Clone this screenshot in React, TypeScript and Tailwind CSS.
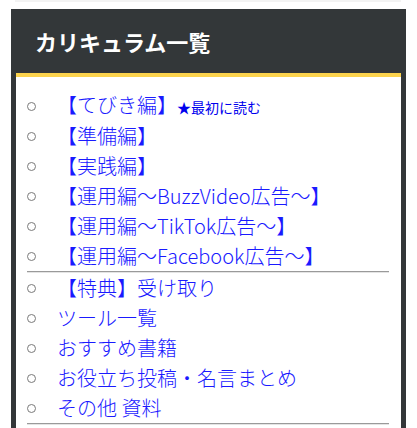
const items1 = [
  { label: '【てびき編】', note: '★最初に読む' },
  { label: '【準備編】' },
  { label: '【実践編】' },
  { label: '【運用編〜BuzzVideo広告〜】' },
  { label: '【運用編〜TikTok広告〜】' },
  { label: '【運用編〜Facebook広告〜】' },
];

const items2 = [
  { label: '【特典】受け取り' },
  { label: 'ツール一覧' },
  { label: 'おすすめ書籍' },
  { label: 'お役立ち投稿・名言まとめ' },
  { label: 'その他 資料' },
];

const Item = ({ label, note }: { label: string; note?: string }) => (
  <li className="flex items-center h-[30px]">
    <span className="w-[30px] mr-[11px] flex justify-center shrink-0">
      <span className="block w-[9px] h-[9px] rounded-full border-[1.5px] border-[#7a7a7a]"></span>
    </span>
    <a href="#" className="text-[20px] leading-[30px] font-light text-[#1a1aff] whitespace-nowrap">
      {label}
      {note && <span className="text-[14px] font-normal text-[#0000ee]">{note}</span>}
    </a>
  </li>
);

const Divider = () => (
  <li className="ml-[11px] mr-[12px] h-[2px] border-t border-[#9a9a9a] border-b border-b-[#e4e4e4]"></li>
);

export default function App() {
  return (
    <div
      className="w-[417px] h-[428px] overflow-hidden bg-white px-[11px]"
      style={{ fontFamily: '"Noto Sans CJK JP", "Noto Sans", sans-serif' }}
    >
      <div className="h-[9px]">
        <div className="h-[2px] ml-[4px] mr-[5px] bg-[#f3f3f3]"></div>
      </div>
      <div className="bg-[#333739] h-[430px] px-[5px]">
        <div className="h-[64px] flex items-center pl-[19px]">
          <h2 className="text-white text-[22px] font-bold">カリキュラム一覧</h2>
        </div>
        <div className="h-[4px] bg-[#fcd34d]"></div>
        <ul className="bg-white pt-[14px] h-full">
          {items1.map((it) => (
            <Item key={it.label} {...it} />
          ))}
          <Divider />
          {items2.map((it) => (
            <Item key={it.label} {...it} />
          ))}
          <Divider />
        </ul>
      </div>
    </div>
  );
}
